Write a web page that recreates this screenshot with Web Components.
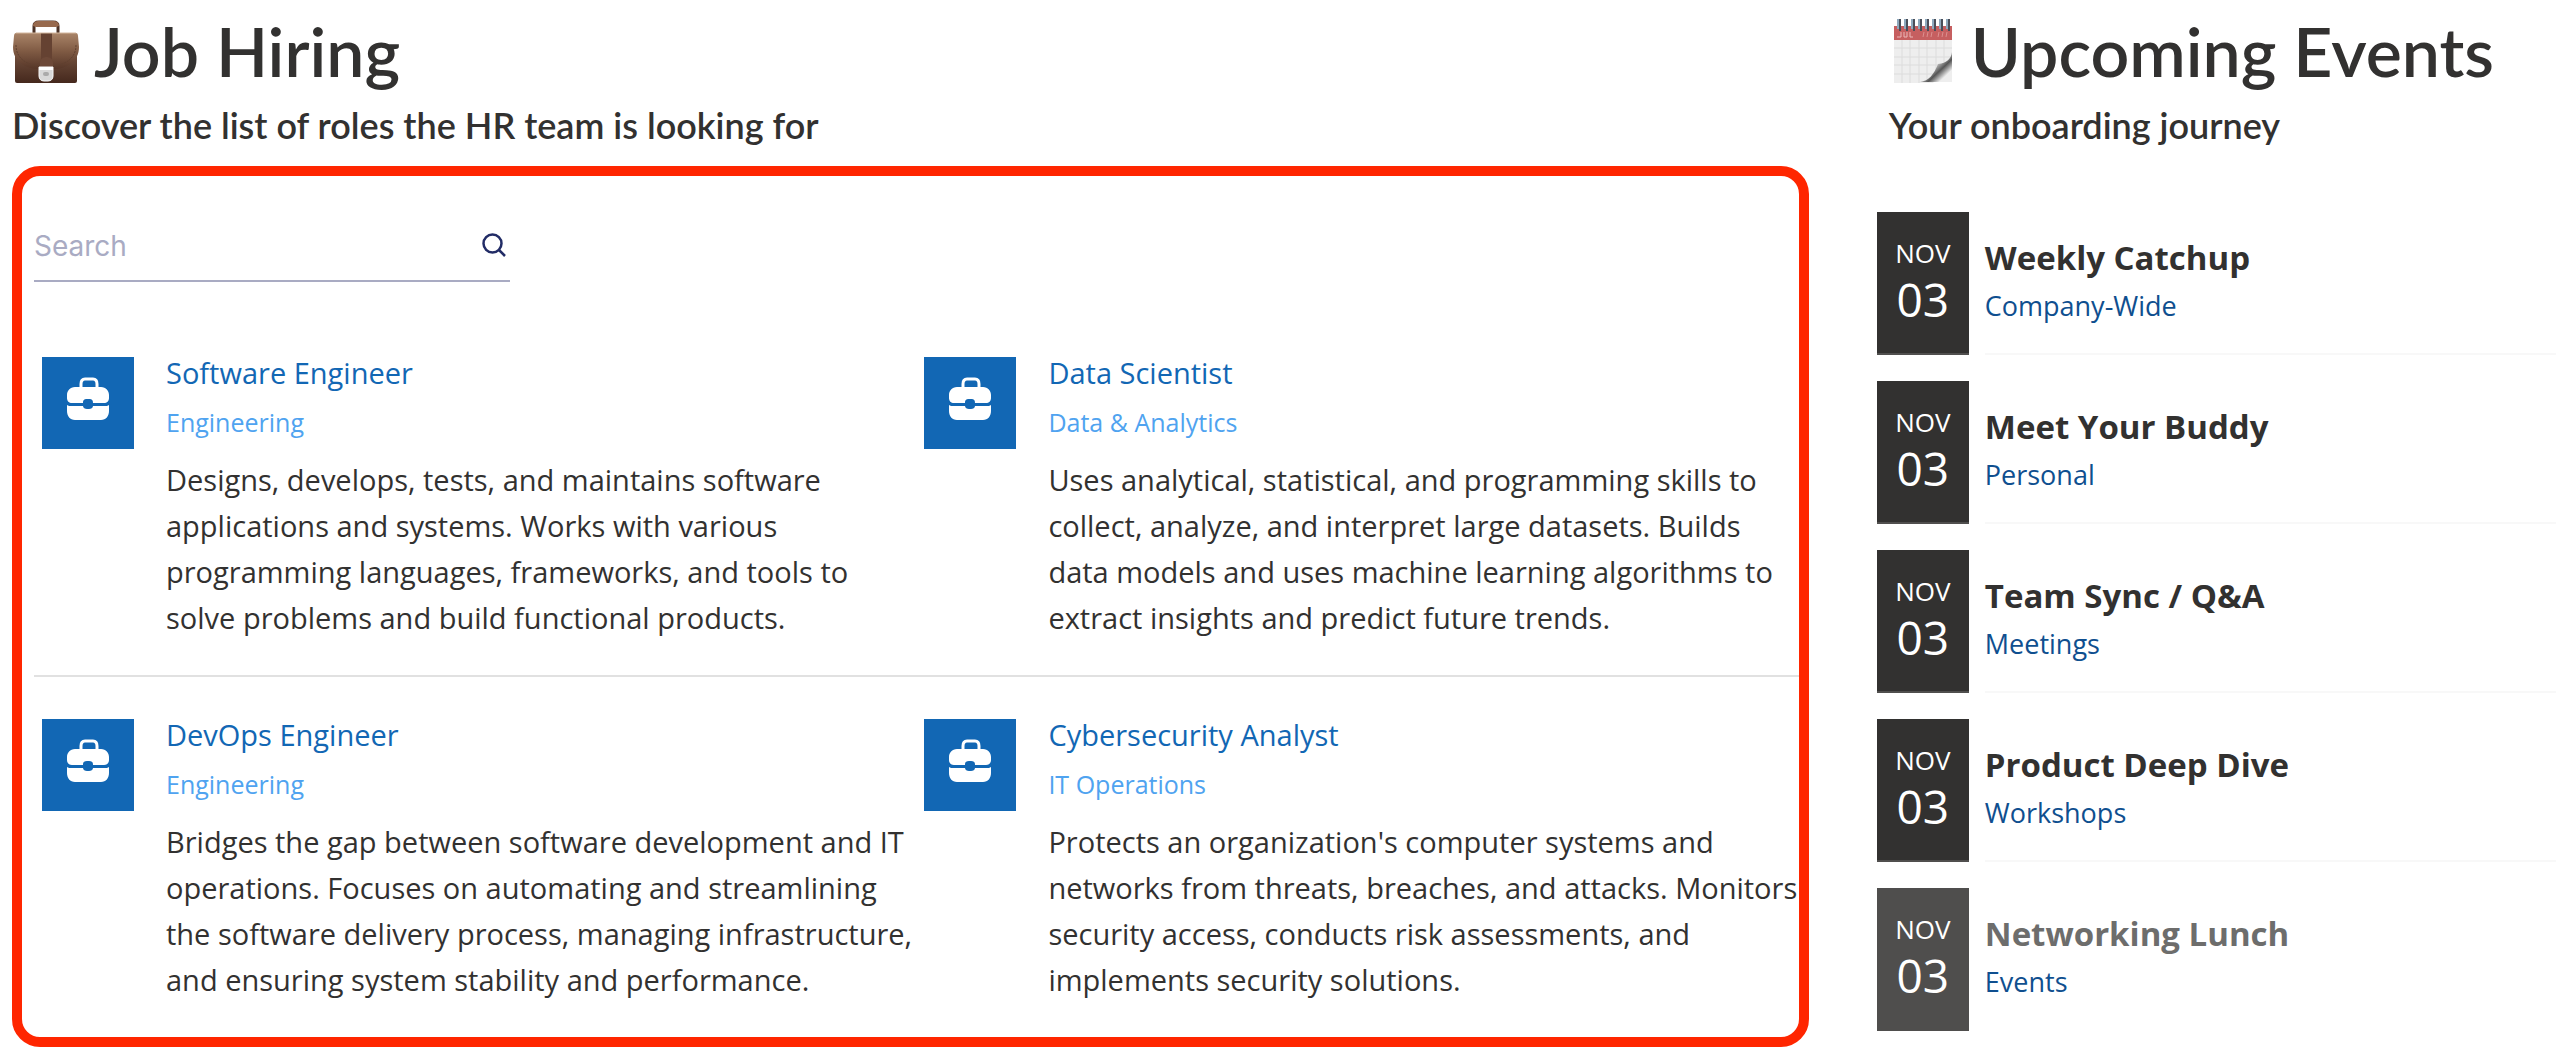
<!DOCTYPE html>
<html lang="en">
<head>
<meta charset="utf-8">
<meta name="viewport" content="width=device-width, initial-scale=1">
<title>Job Hiring</title>
<style>
  body {
    margin: 0;
    background: #fff;
    color: #323130;
    font-family: "Open Sans", "Noto Sans", sans-serif;
  }

  .page {
    display: grid;
    grid-template-columns: minmax(0, 500fr) minmax(0, 189fr);
    column-gap: 68px;
    padding-left: 12px;
  }
</style>
</head>
<body>
<main class="page">
  <section>
    <section-heading icon="briefcase">
      <span slot="title">Job Hiring</span>
      <span slot="subtitle">Discover the list of roles the HR team is looking for</span>
    </section-heading>
    <job-board>
      <search-box slot="search"></search-box>
      <job-card>
        <a slot="title" href="#software-engineer">Software Engineer</a>
        <span slot="department">Engineering</span>
        Designs, develops, tests, and maintains software applications and systems. Works with various programming languages, frameworks, and tools to solve problems and build functional products.
      </job-card>
      <job-card>
        <a slot="title" href="#data-scientist">Data Scientist</a>
        <span slot="department">Data &amp; Analytics</span>
        Uses analytical, statistical, and programming skills to collect, analyze, and interpret large datasets. Builds data models and uses machine learning algorithms to extract insights and predict future trends.
      </job-card>
      <job-card>
        <a slot="title" href="#devops-engineer">DevOps Engineer</a>
        <span slot="department">Engineering</span>
        Bridges the gap between software development and IT operations. Focuses on automating and streamlining the software delivery process, managing infrastructure, and ensuring system stability and performance.
      </job-card>
      <job-card>
        <a slot="title" href="#cybersecurity-analyst">Cybersecurity Analyst</a>
        <span slot="department">IT Operations</span>
        Protects an organization's computer systems and networks from threats, breaches, and attacks. Monitors security access, conducts risk assessments, and implements security solutions.
      </job-card>
    </job-board>
  </section>

  <section>
    <section-heading icon="calendar" class="events-heading">
      <span slot="title">Upcoming Events</span>
      <span slot="subtitle">Your onboarding journey</span>
    </section-heading>
    <event-list>
      <event-item month="NOV" day="03">
        <span slot="title">Weekly Catchup</span>
        <a slot="category" href="#company-wide">Company-Wide</a>
      </event-item>
      <event-item month="NOV" day="03">
        <span slot="title">Meet Your Buddy</span>
        <a slot="category" href="#personal">Personal</a>
      </event-item>
      <event-item month="NOV" day="03">
        <span slot="title">Team Sync / Q&amp;A</span>
        <a slot="category" href="#meetings">Meetings</a>
      </event-item>
      <event-item month="NOV" day="03">
        <span slot="title">Product Deep Dive</span>
        <a slot="category" href="#workshops">Workshops</a>
      </event-item>
      <event-item month="NOV" day="03" faded>
        <span slot="title">Networking Lunch</span>
        <a slot="category" href="#events">Events</a>
      </event-item>
    </event-list>
  </section>
</main>

<template id="section-heading">
  <style>
    :host {
      display: block;
      font-family: Lato, "Open Sans", sans-serif;
      font-weight: 600;
    }

    :host(.events-heading) {
      padding-left: 12px;
    }

    h1 {
      display: flex;
      align-items: center;
      gap: 14px;
      margin: 0;
      font-size: 68px;
      font-weight: inherit;
      line-height: 102px;
      white-space: nowrap;
    }

    p {
      margin: 0;
      font-size: 36px;
      line-height: 46px;
    }

    svg {
      flex: none;
      display: none;
      width: 68px;
      height: 68px;
    }

    :host([icon="briefcase"]) .briefcase,
    :host([icon="calendar"]) .calendar {
      display: block;
    }
  </style>
  <h1>
    <svg class="briefcase" viewBox="0 0 68 68" aria-hidden="true">
      <defs>
        <linearGradient id="leather" x1="0" y1="0" x2="0" y2="1">
          <stop offset="0" stop-color="#a98468"/>
          <stop offset=".5" stop-color="#805b44"/>
          <stop offset="1" stop-color="#563628"/>
        </linearGradient>
        <linearGradient id="base" x1="0" y1="0" x2="0" y2="1">
          <stop offset="0" stop-color="#8b6750"/>
          <stop offset="1" stop-color="#45281d"/>
        </linearGradient>
      </defs>
      <path d="M22 16V9c0-3 2-4 5-4h14c3 0 5 1 5 4v7" fill="none" stroke="#4a3024" stroke-width="3"/>
      <path d="M21 9c0-4 3-5 6-5h14c3 0 6 1 6 5l-3 1H24z" fill="#97694d"/>
      <rect x="3" y="20" width="62" height="46" rx="2" fill="url(#base)"/>
      <path d="M4 16h60c1 0 2 1 2 3l1 11c0 14-12 21-22 22H24C13 51 1 44 1 30l1-11c0-2 1-3 2-3z" fill="url(#leather)"/>
      <path d="M4 28c0 14 11 19 21 21h18c10-2 21-7 21-21" fill="none" stroke="#5f402f" stroke-width="1" stroke-dasharray="2 1"/>
      <path d="M29 16h11v27H29z" fill="#654232"/>
      <path d="M28 50v-4c0-8 13-8 13 0v4z" fill="#6d4938"/>
      <path d="M27 50h14v9c0 3-2 5-5 5h-4c-3 0-5-2-5-5z" fill="#d8d8d8" stroke="#f7f7f7"/>
      <path d="M27 50h14v3H27z" fill="#fff"/>
      <rect x="31" y="55" width="6" height="4" rx="2" fill="#aaa"/>
      <path d="M4 16h60" stroke="#d4b79e"/>
    </svg>
    <svg class="calendar" viewBox="0 0 68 68" aria-hidden="true">
      <defs>
        <linearGradient id="curl" x1="0" y1="0" x2="1" y2="1">
          <stop offset=".3" stop-color="#fff"/>
          <stop offset=".5" stop-color="#aaa"/>
          <stop offset=".62" stop-color="#555"/>
          <stop offset=".8" stop-color="#eee"/>
        </linearGradient>
      </defs>
      <path d="M5 23h58v22L44 66H5z" fill="#eee"/>
      <path d="M5 9h58v14H5z" fill="#c65f60"/>
      <path d="M13 23v43M21 23v43M30 23v43M38 23v42M47 23v38M55 23v30M5 31h58M5 40h58M5 48h57M5 57h46" stroke="#dcdcdc"/>
      <path d="M63 65V35c-1 7-5 11-14 12-4 10-9 17-18 18z" fill="url(#curl)"/>
      <path d="M8 20h4v-5M15 15v5h3v-5M21 15v5h3" fill="none" stroke="#eab8b8"/>
      <path d="M34 20l1-5M38 20l1-5M42 20l1-5M49 20l1-5M53 20l1-5M57 20l1-5" stroke="#dc9090"/>
      <g fill="none" stroke-width="2">
        <path d="M9 12V2M16 12V2M23 12V2M30 12V2M37 12V2M44 12V2M51 12V2M58 12V2" stroke="#8fa9bd"/>
        <path d="M11 14V2M18 14V2M25 14V2M32 14V2M39 14V2M46 14V2M53 14V2M60 14V2" stroke="#4a4f5a"/>
      </g>
    </svg>
    <slot name="title"></slot>
  </h1>
  <p><slot name="subtitle"></slot></p>
</template>

<template id="search-box">
  <style>
    :host {
      display: block;
      width: 476px;
      max-width: 100%;
    }

    form {
      display: flex;
      align-items: center;
      border-bottom: 2px solid #a9abc3;
    }

    input {
      flex: 1;
      min-width: 0;
      height: 68px;
      padding: 0;
      border: 0;
      outline: 0;
      background: none;
      color: #1f2a63;
      font: 28px/36px Inter, sans-serif;
    }

    input::placeholder {
      color: #a9abc3;
      opacity: 1;
    }

    button {
      display: flex;
      padding: 0 4px;
      border: 0;
      background: none;
      cursor: pointer;
    }
  </style>
  <form role="search">
    <input type="search" placeholder="Search" aria-label="Search">
    <button type="button" aria-label="Search jobs">
      <svg width="24" height="28" viewBox="0 0 24 28" fill="none" stroke="#222c66" stroke-width="2.5">
        <circle cx="10.5" cy="11.5" r="9"/>
        <path d="M17 18l6 6"/>
      </svg>
    </button>
  </form>
</template>

<template id="job-board">
  <style>
    :host {
      display: block;
      margin-top: 18px;
      padding: 36px 0 0 12px;
      border: 10px solid #ff2600;
      border-radius: 28px;
    }

    .jobs {
      display: grid;
      grid-template-columns: repeat(2, minmax(0, 1fr));
      margin-top: 33px;
    }

    ::slotted(job-card) {
      border-bottom: 2px solid #e1e1e1;
    }

    ::slotted(job-card:nth-last-child(-n + 2)) {
      border-bottom: 0;
    }
  </style>
  <slot name="search"></slot>
  <div class="jobs"><slot></slot></div>
</template>

<template id="job-card">
  <style>
    :host {
      display: flex;
      align-items: flex-start;
      gap: 32px;
      padding: 42px 0 34px 8px;
    }

    .tile {
      flex: none;
      display: flex;
      justify-content: center;
      width: 92px;
      height: 92px;
      background: #1267b4;
    }

    .title {
      margin: 0;
      font-size: 29px;
      font-weight: 400;
      line-height: 32px;
    }

    ::slotted(a) {
      color: #1267b4;
      text-decoration: none;
    }

    .department {
      margin-top: 16px;
      color: #4fa3f0;
      font-size: 25px;
      line-height: 34px;
    }

    .text {
      margin: 18px 0 0;
      font-size: 29px;
      line-height: 46px;
    }
  </style>
  <div class="tile">
    <svg width="92" height="92" viewBox="0 0 92 92" aria-hidden="true">
      <path d="M39 32v-5c0-3 1-5 4-5h8c3 0 4 2 4 5v5" fill="none" stroke="#fff" stroke-width="3"/>
      <path d="M33 30h26c5 0 8 4 8 8v3c0 3-2 5-5 5h-11c0-3-1-4-4-4h-2c-3 0-4 1-4 4H30c-3 0-5-2-5-5v-3c0-4 3-8 8-8z" fill="#fff"/>
      <path d="M25 48c1 1 3 1 5 1h11c0 2 2 3 4 3h2c2 0 4-1 4-3h11c2 0 4 0 5-1v6c0 5-3 9-8 9H33c-5 0-8-4-8-9z" fill="#fff"/>
    </svg>
  </div>
  <div>
    <h2 class="title"><slot name="title"></slot></h2>
    <div class="department"><slot name="department"></slot></div>
    <p class="text"><slot></slot></p>
  </div>
</template>

<template id="event-list">
  <style>
    :host {
      display: flex;
      flex-direction: column;
      gap: 26px;
      margin-top: 64px;
    }
  </style>
  <slot></slot>
</template>

<template id="event-item">
  <style>
    :host {
      display: flex;
      gap: 16px;
    }

    time {
      flex: none;
      box-sizing: border-box;
      width: 92px;
      height: 143px;
      padding-top: 23px;
      border-bottom: 2px solid #504f4e;
      background: #323130;
      color: #fff;
      text-align: center;
    }

    .month {
      display: block;
      font-size: 26px;
      line-height: 36px;
    }

    .day {
      display: block;
      font-size: 46px;
      line-height: 56px;
    }

    .details {
      flex: 1;
      padding-top: 23px;
      border-bottom: 2px solid #f8f8f8;
    }

    h2 {
      margin: 0;
      font-size: 33px;
      font-weight: 700;
      line-height: 46px;
    }

    .category {
      font-size: 27px;
      line-height: 50px;
    }

    ::slotted(a) {
      color: #0f4f8f;
      text-decoration: none;
    }

    :host([faded]) time {
      border-color: #4f4e4d;
      background: #4f4e4d;
    }

    :host([faded]) .details {
      border-color: transparent;
    }

    :host([faded]) h2 {
      color: #6d6d6c;
    }
  </style>
  <time><span class="month"></span><span class="day"></span></time>
  <div class="details">
    <h2><slot name="title"></slot></h2>
    <div class="category"><slot name="category"></slot></div>
  </div>
</template>

<script>
// Shared base: clones the <template> whose id matches the tag name
class TemplateElement extends HTMLElement {
    constructor() {
        super();
        const shadow = this.attachShadow({ mode: 'open' });
        const template = document.getElementById(this.localName);
        shadow.appendChild(template.content.cloneNode(true));
    }
}

class SectionHeading extends TemplateElement {}
class SearchBox extends TemplateElement {}
class JobBoard extends TemplateElement {}
class JobCard extends TemplateElement {}
class EventList extends TemplateElement {}

class EventItem extends TemplateElement {
    static get observedAttributes() {
        return ['month', 'day'];
    }

    attributeChangedCallback(name, oldValue, newValue) {
        this.shadowRoot.querySelector('.' + name).textContent = newValue;
    }
}

customElements.define('section-heading', SectionHeading);
customElements.define('search-box', SearchBox);
customElements.define('job-board', JobBoard);
customElements.define('job-card', JobCard);
customElements.define('event-list', EventList);
customElements.define('event-item', EventItem);
</script>
</body>
</html>
